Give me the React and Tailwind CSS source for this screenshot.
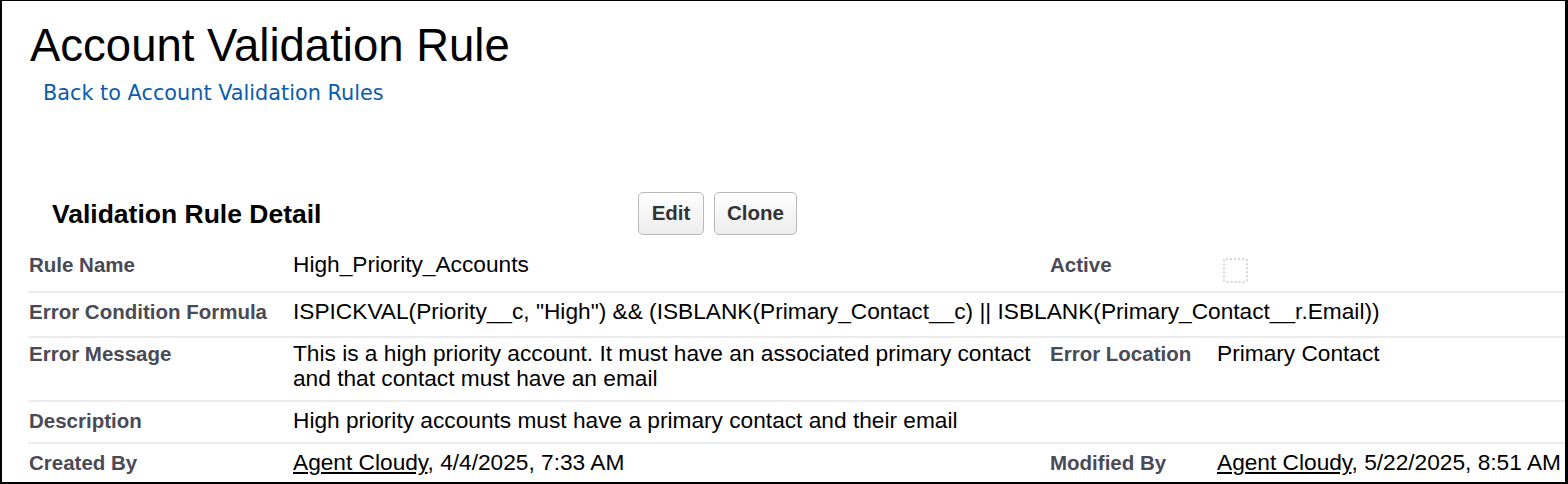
import React from 'react';

const sans = { fontFamily: '"Liberation Sans", Arial, Helvetica, sans-serif' };

function Label({ children, className = '' }) {
    return (
        <div className={`shrink-0 font-bold text-[20.5px] text-[#4a4a56] ${className}`}>{children}</div>
    );
}

function Row({ children, className = 'min-h-[45px] pt-[6px] pb-[8px]' }) {
    return (
        <div className={`flex border-b-2 border-[#ececec] text-[22.7px] leading-[25px] text-black ${className}`}>
            {children}
        </div>
    );
}

export default function App() {
    return (
        <div
            className="w-[1568px] h-[484px] overflow-hidden bg-white border-l-2 border-t border-r-[3px] border-b-2 border-black flex flex-col"
            style={sans}
        >
            <h1 className="mt-[22px] pl-[28px] text-[45.5px] leading-none text-black">
                Account Validation Rule
            </h1>
            <a
                href="#"
                className="mt-[14px] ml-[41px] self-start text-[20.8px] leading-none text-[#0b5cab]"
                style={{ fontFamily: '"DejaVu Sans", Verdana, sans-serif' }}
            >
                Back to Account Validation Rules
            </a>

            <div className="mt-[89px] flex items-center">
                <h2 className="w-[636px] shrink-0 pl-[50px] text-[26.5px] font-bold leading-none text-black">
                    Validation Rule Detail
                </h2>
                <div className="flex gap-[10px]">
                    <button className="h-[43px] w-[66px] rounded-[5px] border border-[#b9b9b9] bg-gradient-to-b from-white to-[#ececec] text-[20.5px] font-bold text-[#333]">
                        Edit
                    </button>
                    <button className="h-[43px] w-[83px] rounded-[5px] border border-[#b9b9b9] bg-gradient-to-b from-white to-[#ececec] text-[20.5px] font-bold text-[#333]">
                        Clone
                    </button>
                </div>
            </div>

            <div className="mt-[11px] ml-[26px]">
                <Row>
                    <Label className="w-[265px] pl-[1px]">Rule Name</Label>
                    <div className="w-[757px] shrink-0">High_Priority_Accounts</div>
                    <Label className="w-[167px]">Active</Label>
                    <div className="pl-[6px]">
                        <div className="mt-[6px] h-[25px] w-[25px] rounded-[3px] border-2 border-dotted border-[#d6d6d6]" />
                    </div>
                </Row>
                <Row>
                    <Label className="w-[265px] pl-[1px]">Error Condition Formula</Label>
                    <div className="whitespace-nowrap">
                        ISPICKVAL(Priority__c, "High") &amp;&amp; (ISBLANK(Primary_Contact__c) || ISBLANK(Primary_Contact__r.Email))
                    </div>
                </Row>
                <Row className="pt-[3px] pb-[9px]">
                    <Label className="w-[265px] pl-[1px]">Error Message</Label>
                    <div className="w-[757px] shrink-0 pr-[8px]">
                        This is a high priority account. It must have an associated primary contact and that contact must have an email
                    </div>
                    <Label className="w-[167px]">Error Location</Label>
                    <div>Primary Contact</div>
                </Row>
                <Row className="min-h-[42px] pt-[6px] pb-[7px]">
                    <Label className="w-[265px] pl-[1px]">Description</Label>
                    <div>High priority accounts must have a primary contact and their email</div>
                </Row>
                <Row>
                    <Label className="w-[265px] pl-[1px]">Created By</Label>
                    <div className="w-[757px] shrink-0">
                        <a href="#" className="underline text-black">Agent Cloudy</a>, 4/4/2025, 7:33 AM
                    </div>
                    <Label className="w-[167px]">Modified By</Label>
                    <div className="whitespace-nowrap">
                        <a href="#" className="underline text-black">Agent Cloudy</a>, 5/22/2025, 8:51 AM
                    </div>
                </Row>
            </div>
        </div>
    );
}
